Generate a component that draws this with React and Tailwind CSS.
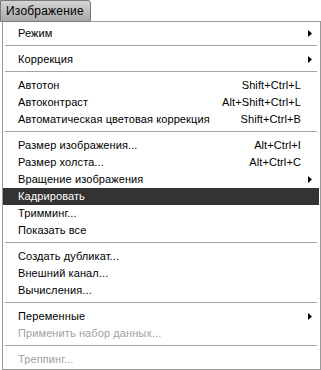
import React from "react";

const items = [
  { label: "Режим", sub: true },
  "sep",
  { label: "Коррекция", sub: true },
  "sep",
  { label: "Автотон", key: "Shift+Ctrl+L" },
  { label: "Автоконтраст", key: "Alt+Shift+Ctrl+L" },
  { label: "Автоматическая цветовая коррекция", key: "Shift+Ctrl+B" },
  "sep",
  { label: "Размер изображения...", key: "Alt+Ctrl+I" },
  { label: "Размер холста...", key: "Alt+Ctrl+C" },
  { label: "Вращение изображения", sub: true },
  { label: "Кадрировать", active: true },
  { label: "Тримминг..." },
  { label: "Показать все" },
  "sep",
  { label: "Создать дубликат..." },
  { label: "Внешний канал..." },
  { label: "Вычисления..." },
  "sep",
  { label: "Переменные", sub: true },
  { label: "Применить набор данных...", disabled: true },
  "sep",
  { label: "Треппинг...", disabled: true },
];

const Arrow = () => (
  <svg width="4" height="7" viewBox="0 0 4 7" className="absolute right-[7px] top-[5px]">
    <path d="M0 0 L4 3.5 L0 7 Z" fill="#000" />
  </svg>
);

const App = () => {
  return (
    <div
      className="w-[321px] h-[370px] bg-white text-[11px] text-black"
      style={{ fontFamily: '"Liberation Sans", Arial, sans-serif' }}
    >
      {/* menu bar tab */}
      <div className="flex h-[22px]">
        <div className="w-[91px] h-[22px] bg-gradient-to-b from-[#d4d4d4] to-[#a8a8a8] border border-[#7a7a7a] rounded-tr-[3px] pl-[5px] text-[12px] leading-[20px] tracking-[0.2px]">
          Изображение
        </div>
        <div className="flex-1 border-b border-[#999]" />
      </div>

      {/* dropdown */}
      <div className="ml-[2px] w-[319px] h-[348px] border-l border-r border-b border-[#999] pt-[3px]">
        {items.map((item, i) =>
          item === "sep" ? (
            <div key={i} className="pt-[3px] pb-[5px] pl-[2px] pr-[3px]">
              <div className="h-px bg-[#a3a3a3]" />
            </div>
          ) : (
            <div
              key={i}
              className={
                "relative flex items-center h-[17px] pl-[15px] pr-[18px] mr-px tracking-[0.1px] " +
                (item.active
                  ? "bg-[#333333] text-white"
                  : item.disabled
                  ? "text-[#a0a0a0]"
                  : "")
              }
            >
              <span className="flex-1">{item.label}</span>
              {item.key && <span>{item.key}</span>}
              {item.sub && <Arrow />}
            </div>
          )
        )}
      </div>
    </div>
  );
};

export default App;
